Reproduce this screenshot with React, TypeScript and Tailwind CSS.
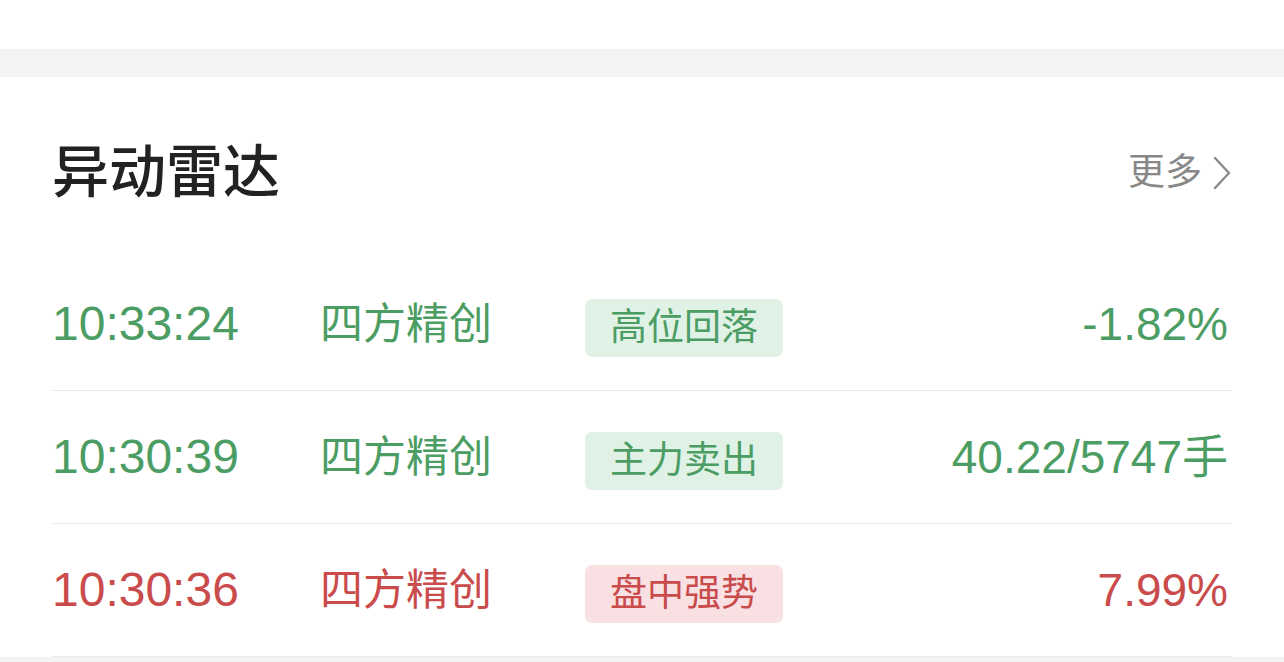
const font = "font-['Liberation_Sans','Noto_Sans_CJK_SC',sans-serif]";

type Tone = "up" | "down";

const rows: { time: string; name: string; tag: string; value: string; tone: Tone }[] = [
  { time: "10:33:24", name: "四方精创", tag: "高位回落", value: "-1.82%", tone: "down" },
  { time: "10:30:39", name: "四方精创", tag: "主力卖出", value: "40.22/5747手", tone: "down" },
  { time: "10:30:36", name: "四方精创", tag: "盘中强势", value: "7.99%", tone: "up" },
];

function ChevronRight() {
  return (
    <svg width="20" height="36" viewBox="0 0 20 36" fill="none" className="ml-[10px]">
      <polyline points="3,3 17,18 3,33" stroke="#8a8a8a" strokeWidth="2.4" strokeLinecap="round" strokeLinejoin="round" />
    </svg>
  );
}

export default function App() {
  return (
    <div className={`w-[1284px] h-[662px] overflow-hidden bg-[#f3f3f5] ${font}`}>
      <div className="h-[49px] bg-white" />
      <div className="h-[28px]" />
      <section className="bg-white px-[52px]">
        <div className="h-[181px] pt-[10px] flex items-center justify-between">
          <h2 className="text-[57px] leading-none font-medium text-[#222222]">异动雷达</h2>
          <button className="flex items-center text-[37px] leading-none text-[#888888]">
            更多
            <ChevronRight />
          </button>
        </div>

        <div>
          {rows.map((r, i) => {
            const text = r.tone === "up" ? "text-[#c94b4c]" : "text-[#4c9d63]";
            const badge = r.tone === "up" ? "bg-[#f9e1e3]" : "bg-[#e0f1e6]";
            return (
              <div key={i} className="h-[133px] flex items-center border-b-[1.5px] border-[#ececee] pr-[4px]">
                <span className={`w-[268px] text-[48px] leading-none ${text}`}>{r.time}</span>
                <span className={`w-[265px] text-[43px] leading-none ${text}`}>{r.name}</span>
                <span className={`w-[198px] h-[58px] mt-[7px] rounded-[7px] flex items-center justify-center text-[37px] leading-none ${badge} ${text}`}>
                  {r.tag}
                </span>
                <span className={`flex-1 text-right text-[46px] leading-none ${text}`}>{r.value}</span>
              </div>
            );
          })}
        </div>
      </section>
    </div>
  );
}
